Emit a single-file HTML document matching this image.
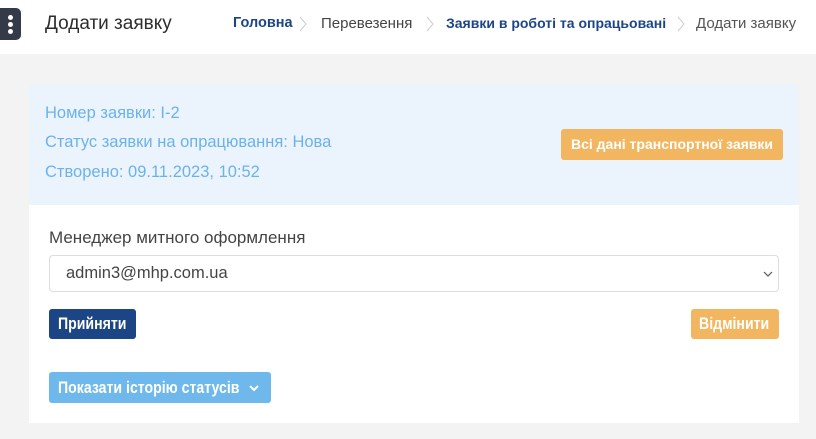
<!DOCTYPE html>
<html><head><meta charset="utf-8"><style>
*{box-sizing:border-box;margin:0;padding:0}
body{width:816px;height:439px;background:#f3f3f3;font-family:"Liberation Sans",sans-serif;position:relative;overflow:hidden}
.hdr{position:absolute;left:0;top:0;width:816px;height:54px;background:#fff}
.ham{position:absolute;left:0;top:8px;width:21px;height:32px;background:#343a47;border-radius:0 5px 5px 0}
.ham i{position:absolute;left:8px;width:5px;height:5px;border-radius:50%;background:#fff}
.t{position:absolute;left:45px;top:13px;font-size:19px;color:#2d2d2d}
.bc{position:absolute;top:15px;font-size:15px;white-space:nowrap}
.chev{position:absolute;top:15px}
.abs{position:absolute}
.info{position:absolute;left:29px;top:84px;width:770px;height:121px;background:#ebf4fc}
.info div{position:absolute;left:16px;font-size:16.5px;color:#6cb2ea}
.card{position:absolute;left:29px;top:205px;width:770px;height:218px;background:#fff}
.btn{position:absolute;color:#fff;font-size:14px;font-weight:bold;border-radius:3px;text-align:center;white-space:nowrap}
.nb span{display:inline-block;font-size:17px;transform:scaleX(0.83);transform-origin:left center}
</style></head><body>
<div class="hdr">
<div class="ham"><i style="top:7px"></i><i style="top:14px"></i><i style="top:21px"></i></div>
<div class="t">Додати заявку</div>
<div class="bc" style="left:233px;color:#1c4586;font-weight:bold;font-size:14.5px">Головна</div>
<svg class="chev" style="left:298px" width="10" height="18"><path d="M2 2l6 7-6 7" fill="none" stroke="#ccc" stroke-width="1"/></svg>
<div class="bc" style="left:321px;color:#444">Перевезення</div>
<svg class="chev" style="left:425px" width="10" height="18"><path d="M2 2l6 7-6 7" fill="none" stroke="#ccc" stroke-width="1"/></svg>
<div class="bc" style="left:446px;color:#1c4586;font-weight:bold;font-size:14px">Заявки в роботі та опрацьовані</div>
<svg class="chev" style="left:676px" width="10" height="18"><path d="M2 2l6 7-6 7" fill="none" stroke="#ccc" stroke-width="1"/></svg>
<div class="bc" style="left:696px;color:#555">Додати заявку</div>
</div>
<div class="info">
<div style="top:20px">Номер заявки: I-2</div>
<div style="top:49px">Статус заявки на опрацювання: Нова</div>
<div style="top:79px">Створено: 09.11.2023, 10:52</div>
</div>
<div class="btn" style="left:561px;top:129px;width:222px;height:31px;line-height:31px;background:#f3b660">Всі дані транспортної заявки</div>
<div class="card"></div>
<div class="abs" style="left:49px;top:228px;font-size:17px;color:#444">Менеджер митного оформлення</div>
<div class="abs" style="left:49px;top:255px;width:730px;height:37px;border:1px solid #ddd;border-radius:4px;background:#fff">
<span class="abs" style="left:16px;top:8px;font-size:16.5px;color:#444">admin3@mhp.com.ua</span>
<svg class="abs" style="right:4px;top:13px" width="12" height="10"><path d="M2 3l4 4 4-4" fill="none" stroke="#555" stroke-width="1.2"/></svg>
</div>
<div class="btn nb" style="left:49px;top:309px;width:87px;height:30px;line-height:30px;background:#1c4586;text-align:left;padding-left:9px"><span>Прийняти</span></div>
<div class="btn nb" style="left:691px;top:309px;width:88px;height:30px;line-height:30px;background:#f3b660;text-align:left;padding-left:8px"><span>Відмінити</span></div>
<div class="btn nb" style="left:49px;top:372px;width:222px;height:31px;line-height:31px;background:#6fb8eb;text-align:left;padding-left:9px"><span>Показати історію статусів</span><svg width="10" height="8" style="position:absolute;left:200px;top:12px"><path d="M1 2l4 4 4-4" fill="none" stroke="#fff" stroke-width="2"/></svg></div>
</body></html>
